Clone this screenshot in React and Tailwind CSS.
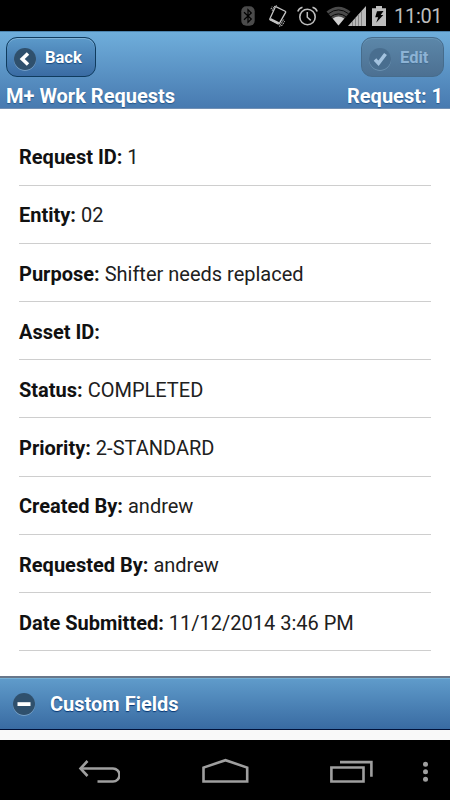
const fields = [
  { label: 'Request ID:', value: '1' },
  { label: 'Entity:', value: '02' },
  { label: 'Purpose:', value: 'Shifter needs replaced' },
  { label: 'Asset ID:', value: '' },
  { label: 'Status:', value: 'COMPLETED' },
  { label: 'Priority:', value: '2-STANDARD' },
  { label: 'Created By:', value: 'andrew' },
  { label: 'Requested By:', value: 'andrew' },
  { label: 'Date Submitted:', value: '11/12/2014 3:46 PM' },
];

const StatusBar = () => (
  <div className="flex h-[31px] shrink-0 items-center justify-end bg-black pr-[9px]">
    {/* Bluetooth */}
    <svg width="14" height="20" viewBox="0 0 14 20" className="mr-[14px]">
      <rect x="0.3" y="0.3" width="13.4" height="19.4" rx="5" fill="#4b4b4b" />
      <path d="M3 6.2L10.3 13L7 16.3V3.7L10.3 7L3 13.8" fill="none" stroke="#000" strokeWidth="1.2" />
    </svg>
    {/* Vibrate */}
    <svg width="18" height="22" viewBox="0 0 18 22" className="mr-[10px]" fill="none" stroke="#c4c4c4">
      <path d="M7.3 1.8L16.2 6.2Q16.9 6.6 16.6 7.4L10.4 18.4Q9.9 19.2 9.1 18.8L1.3 14.9Q0.6 14.5 0.9 13.7L6.2 2.3Q6.6 1.4 7.3 1.8Z" strokeWidth="1.3" />
      <path d="M1.2 14L9.6 18.2" strokeWidth="2.4" />
      <path d="M3.2 5.8L5 1.6L8 0.6M2 4.2L3 1.6M11.4 19.8L14.6 14.6M10 21.2L13.2 20.4L15.6 16.2" strokeWidth="1" strokeDasharray="1.6 0.7" />
    </svg>
    {/* Alarm */}
    <svg width="21" height="20" viewBox="0 0 21 20" className="mr-[8px]" fill="none" stroke="#bdbdbd">
      <circle cx="10.5" cy="11" r="7.7" strokeWidth="1.6" />
      <path d="M10.3 6V11.2L13.8 14.4" strokeWidth="1.5" />
      <path d="M0.8 5.5Q1.7 2.3 5.5 1.2M15.5 1.2Q19.3 2.3 20.2 5.5" strokeWidth="1.5" />
    </svg>
    {/* Wifi */}
    <svg width="25" height="20" viewBox="0 0 25 20" className="-mr-[3px]">
      <path d="M0.5 5.5Q12.5 -4 24.5 5.5L12.5 19.5Z" fill="#4a4a4a" />
      <path d="M6.8 12.6Q12.5 8.4 18.2 12.6L12.5 19.5Z" fill="#d0d0d0" />
      <path d="M2.3 7.8Q12.5 0 22.7 7.8M4.8 10.8Q12.5 5 20.2 10.8" fill="none" stroke="#080808" strokeWidth="1" />
    </svg>
    {/* Signal */}
    <svg width="18" height="20" viewBox="0 0 18 20" className="mr-[6px]">
      <path d="M0 20L18 0V20Z" fill="#b9b9b9" />
      <path d="M4.5 15V20M7.5 12V20M10.5 8.5V20M13.5 5V20" stroke="#858585" strokeWidth="1" />
    </svg>
    {/* Battery */}
    <svg width="14" height="20" viewBox="0 0 14 20" className="mr-[8px]">
      <path d="M4 0H10V2.3H14V20H0V2.3H4Z" fill="#bdbdbd" />
      <path d="M5 5.3L11.5 5L8.7 9H11.3L4.2 16.8L6.2 11.2H3.2Z" fill="#000" />
    </svg>
    <span className="w-[47px] pt-[2px] text-[20px] leading-[31px] tracking-[-0.3px] text-[#bdbdbd]">11:01</span>
  </div>
);

const Header = () => (
  <header className="flex h-[78px] shrink-0 flex-col border-t border-b border-t-[#4c83ad] border-b-[#7290b4] bg-linear-to-b from-[#6faedb] to-[#487ab0]">
    <div className="flex justify-between pt-[5px] pr-[6px] pl-[6px]">
      <button className="flex h-10 w-[90px] items-center rounded-[11px] border border-[#0f3b5e] bg-linear-to-b from-[#5c9aca] to-[#3a6ba3] pl-[6px] shadow-[inset_0_1px_0_#80b3d9]">
        <svg width="24" height="24" viewBox="0 0 24 24" className="mt-[3px]">
          <circle cx="12" cy="12.8" r="11" fill="#85acd0" />
          <circle cx="12" cy="12" r="11" fill="#2f506d" />
          <path d="M15 6.5L9.2 12L15 17.5" fill="none" stroke="#fff" strokeWidth="3.5" />
        </svg>
        <span className="mt-[3px] ml-[8px] text-[16.5px] font-bold text-white [text-shadow:0_1px_1px_#194b7e]">Back</span>
      </button>
      <button className="flex h-10 w-[83px] items-center rounded-[11px] border border-[#466c8c] bg-linear-to-b from-[#5c87a9] to-[#4c7092] pl-[6px] shadow-[inset_0_1px_0_#6794b5]" disabled>
        <svg width="24" height="24" viewBox="0 0 24 24" className="mt-[3px]">
          <circle cx="12" cy="12.8" r="11" fill="#7399b8" />
          <circle cx="12" cy="12" r="11" fill="#496e8f" />
          <path d="M7 12.5L10.5 16.2L17.5 7" fill="none" stroke="#a4c3df" strokeWidth="3.5" />
        </svg>
        <span className="mt-[3px] ml-[8px] text-[16.5px] font-bold text-[#8db3d5] [text-shadow:0_1px_1px_#42698c]">Edit</span>
      </button>
    </div>
    <div className="flex justify-between pt-[7px] pr-[7px] pl-[6px] text-[20px] leading-6 font-bold text-white [text-shadow:0_1px_1px_#27578a]">
      <span>M+ Work Requests</span>
      <span>Request: 1</span>
    </div>
  </header>
);

const NavBar = () => (
  <nav className="flex h-[60px] shrink-0 items-start bg-black pt-[18px] pl-[78px]">
    <svg width="42" height="26" viewBox="0 0 42 26" fill="none" stroke="#9f9f9f" strokeWidth="2.6">
      <path d="M2.5 10.5H35A6.3 6.3 0 0 1 35 23.5H19.5" />
      <path d="M9.5 3L2.5 10.5L9.5 18" />
    </svg>
    <svg width="47" height="26" viewBox="0 0 47 26" className="ml-[81.5px]" fill="none" stroke="#9f9f9f" strokeWidth="2.6">
      <path d="M1.5 23.5V9.6L23.5 2.2L45.2 9.6V23.5Z" />
    </svg>
    <svg width="43" height="26" viewBox="0 0 43 26" className="ml-[81.5px]" fill="none" stroke="#9f9f9f" strokeWidth="2.6">
      <path d="M1.4 9.5H33.5V23.5H1.4Z" />
      <path d="M10 4.1H41.4V18.7" />
    </svg>
    <svg width="6" height="26" viewBox="0 0 6 26" className="mt-[1px] ml-[49.5px]" fill="#9f9f9f">
      <circle cx="2.5" cy="5.3" r="2.5" />
      <circle cx="2.5" cy="12.8" r="2.5" />
      <circle cx="2.5" cy="20.2" r="2.5" />
    </svg>
  </nav>
);

const App = () => {
  return (
    <div className="flex h-[800px] w-[450px] flex-col overflow-hidden bg-[#f9f9f9] font-['Roboto',sans-serif]">
      <StatusBar />
      <Header />
      <main className="h-[567px] shrink-0 bg-white px-[19px] pt-[18.4px]">
        {fields.map((field) => (
          <div
            key={field.label}
            className="h-[58.2px] border-b border-[#cecece] pt-[17.9px] text-[20px] leading-6 text-[#202020]"
          >
            <strong className="font-bold text-[#111]">{field.label}</strong> {field.value}
          </div>
        ))}
      </main>
      <div className="flex h-[54px] shrink-0 items-center border-t-2 border-b border-t-[#68778a] border-b-[#001139] bg-linear-to-b from-[#609ccb] to-[#396ba2] pl-3 shadow-[inset_0_1px_0_#76b1d6]">
        <svg width="24" height="24" viewBox="0 0 24 24">
          <circle cx="12" cy="12.8" r="11" fill="#85acd0" />
          <circle cx="12" cy="12" r="11" fill="#2f506d" />
          <rect x="5.5" y="10.2" width="13" height="3.8" fill="#fff" />
        </svg>
        <span className="ml-[14px] text-[20px] font-bold text-white [text-shadow:0_1px_1px_#073774]">Custom Fields</span>
      </div>
      <div className="h-[10px] shrink-0 bg-[#f9f9f9]" />
      <NavBar />
    </div>
  );
};

export default App;
